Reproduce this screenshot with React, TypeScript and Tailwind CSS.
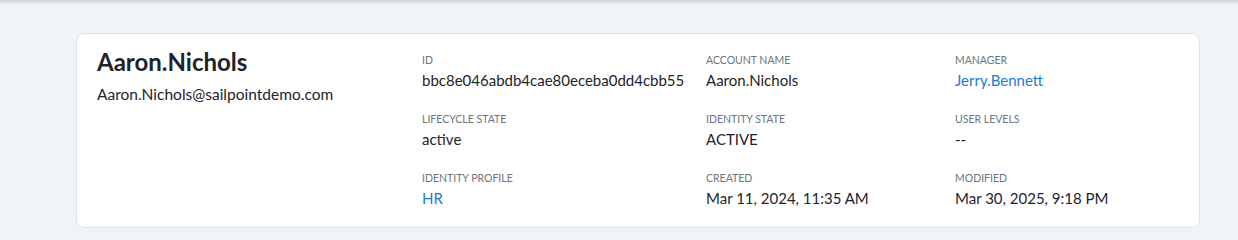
import React from "react";

type Field = {
  label: string;
  value: string;
  link?: boolean;
};

const fields: Field[] = [
  { label: "ID", value: "bbc8e046abdb4cae80eceba0dd4cbb55" },
  { label: "Account Name", value: "Aaron.Nichols" },
  { label: "Manager", value: "Jerry.Bennett", link: true },
  { label: "Lifecycle State", value: "active" },
  { label: "Identity State", value: "ACTIVE" },
  { label: "User Levels", value: "--" },
  { label: "Identity Profile", value: "HR", link: true },
  { label: "Created", value: "Mar 11, 2024, 11:35 AM" },
  { label: "Modified", value: "Mar 30, 2025, 9:18 PM" },
];

const App = () => {
  return (
    <div
      className="h-[240px] w-full bg-[#f1f4f7] overflow-hidden"
      style={{ fontFamily: "Lato, 'Noto Sans', sans-serif" }}
    >
      {/* top header shadow */}
      <div className="h-[5px] bg-gradient-to-b from-[#cfd2d6] to-[#f1f4f7]" />

      <div className="mt-[28px] ml-[76px] w-[1124px] rounded-lg border border-[#dde2e8] bg-white pl-5 pt-[14px] pb-[19px] flex">
        {/* identity name */}
        <div className="w-[325px] shrink-0">
          <h2 className="text-[24px] leading-7 font-bold text-[#1d232b]">
            Aaron.Nichols
          </h2>
          <p className="mt-2 text-[15.5px] leading-5 text-[#1d232b]">
            Aaron.Nichols@sailpointdemo.com
          </p>
        </div>

        {/* attributes */}
        <div className="pt-1 grid grid-cols-[284px_249px_1fr] gap-y-[21px] flex-1">
          {fields.map((f) => (
            <div key={f.label} className="flex flex-col">
              <span className="text-[10.5px] leading-4 uppercase text-[#6c7480]">
                {f.label}
              </span>
              <span
                className={
                  "mt-[2px] text-[15px] leading-5 " +
                  (f.link ? "text-[#1a7bd8]" : "text-[#1d232b]")
                }
              >
                {f.value}
              </span>
            </div>
          ))}
        </div>
      </div>
    </div>
  );
};

export default App;
